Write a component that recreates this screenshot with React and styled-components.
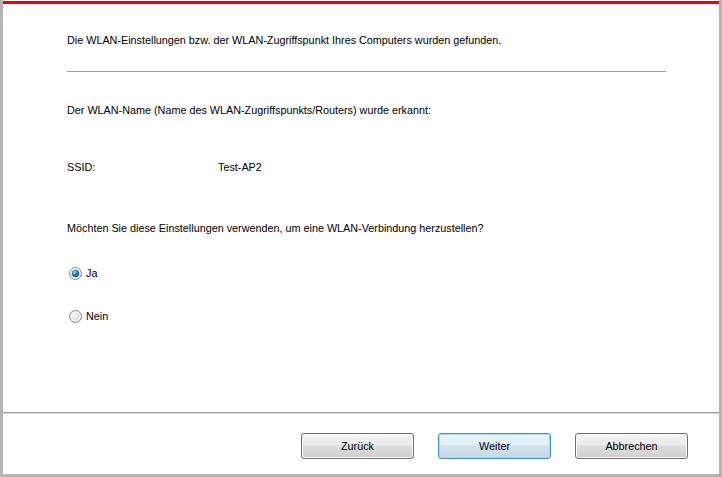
import React, { useState } from "react";
import styled, { createGlobalStyle } from "styled-components";

const Global = createGlobalStyle`
  html, body { margin: 0; padding: 0; background: #fff; }
  body { font-family: Tahoma, "DejaVu Sans", "Liberation Sans", sans-serif; }
`;

const Window = styled.div`
  box-sizing: border-box;
  width: 722px;
  height: 477px;
  display: flex;
  flex-direction: column;
  background: #fff;
  border-left: 3px solid #b4b4b4;
  border-right: 3px solid #b4b4b4;
  border-bottom: 3px solid #b4b4b4;
  padding-top: 1px;
`;

const RedBar = styled.div`
  height: 3px;
  background: #e60012;
`;

const Content = styled.div`
  flex: 1;
  display: flex;
  flex-direction: column;
  padding: 0 53px 0 64px;
`;

const Text = styled.div`
  font-family: "Liberation Sans", Arial, sans-serif;
  font-size: 10.8px;
  line-height: 14px;
  color: #000;
  margin-top: ${(p) => p.$mt}px;
`;

const Rule = styled.div`
  height: 1px;
  background: #a0a0a0;
  margin-top: ${(p) => p.$mt}px;
`;

const SsidRow = styled.div`
  display: grid;
  grid-template-columns: 151px auto;
  margin-top: ${(p) => p.$mt}px;
  font-family: "Liberation Sans", Arial, sans-serif;
  font-size: 10.8px;
  line-height: 14px;
  color: #000;
`;

const RadioLabel = styled.label`
  display: flex;
  align-items: center;
  gap: 4px;
  margin-top: ${(p) => p.$mt}px;
  margin-left: 2px;
  font-family: "Liberation Sans", Arial, sans-serif;
  font-size: 10.8px;
  line-height: 14px;
  color: #000;
  cursor: default;
`;

const Footer = styled.div`
  height: 61px;
  border-top: 1px solid #a0a0a0;
  box-shadow: inset 0 1px 0 #d8d8d8;
  display: flex;
  align-items: center;
  justify-content: flex-end;
  gap: 24px;
  padding-right: 31px;
`;

const Button = styled.button`
  box-sizing: border-box;
  width: 113px;
  height: 26px;
  margin-top: 4px;
  border-radius: 3px;
  border: 1px solid ${(p) => (p.$primary ? "#3c93cf" : "#707070")};
  background: ${(p) =>
    p.$primary
      ? "linear-gradient(#eaf3f9 0%, #e3edf5 45%, #d3e2ee 50%, #c6d8e6 100%)"
      : "linear-gradient(#f2f2f2 0%, #ebebeb 45%, #dddddd 50%, #cfcfcf 100%)"};
  box-shadow: inset 0 0 0 1px ${(p) => (p.$primary ? "#a8dcf5" : "#fbfbfb")};
  font-family: "Liberation Sans", Arial, sans-serif;
  font-size: 10.8px;
  color: #000;
  padding: 0;
`;

function Radio({ checked }) {
  return (
    <svg width="13" height="13" viewBox="0 0 13 13">
      <defs>
        <radialGradient id="rbg" cx="0.4" cy="0.35" r="0.7">
          <stop offset="0" stopColor="#f4f4f4" />
          <stop offset="1" stopColor="#d4d4d4" />
        </radialGradient>
        <radialGradient id="rdot" cx="0.35" cy="0.3" r="0.8">
          <stop offset="0" stopColor="#9fe0ff" />
          <stop offset="0.45" stopColor="#1b8bd0" />
          <stop offset="1" stopColor="#0a4f8a" />
        </radialGradient>
      </defs>
      <circle cx="6.5" cy="6.5" r="6" fill="url(#rbg)" stroke="#8f8f8f" strokeWidth="1" />
      <circle cx="6.5" cy="6.5" r="4.6" fill="none" stroke="#ffffff" strokeWidth="0.8" />
      {checked && <circle cx="6.5" cy="6.5" r="3.4" fill="url(#rdot)" stroke="#2a5f8a" strokeWidth="0.5" />}
    </svg>
  );
}

export default function App() {
  const [choice, setChoice] = useState("ja");
  return (
    <>
      <Global />
      <Window>
        <RedBar />
        <Content>
          <Text $mt={29}>
            Die WLAN-Einstellungen bzw. der WLAN-Zugriffspunkt Ihres Computers wurden gefunden.
          </Text>
          <Rule $mt={24} />
          <Text $mt={31}>
            Der WLAN-Name (Name des WLAN-Zugriffspunkts/Routers) wurde erkannt:
          </Text>
          <SsidRow $mt={43}>
            <span>SSID:</span>
            <span>Test-AP2</span>
          </SsidRow>
          <Text $mt={47}>
            Möchten Sie diese Einstellungen verwenden, um eine WLAN-Verbindung herzustellen?
          </Text>
          <RadioLabel $mt={31} onClick={() => setChoice("ja")}>
            <Radio checked={choice === "ja"} />
            <span>Ja</span>
          </RadioLabel>
          <RadioLabel $mt={29} onClick={() => setChoice("nein")}>
            <Radio checked={choice === "nein"} />
            <span>Nein</span>
          </RadioLabel>
        </Content>
        <Footer>
          <Button>Zurück</Button>
          <Button $primary>Weiter</Button>
          <Button>Abbrechen</Button>
        </Footer>
      </Window>
    </>
  );
}
